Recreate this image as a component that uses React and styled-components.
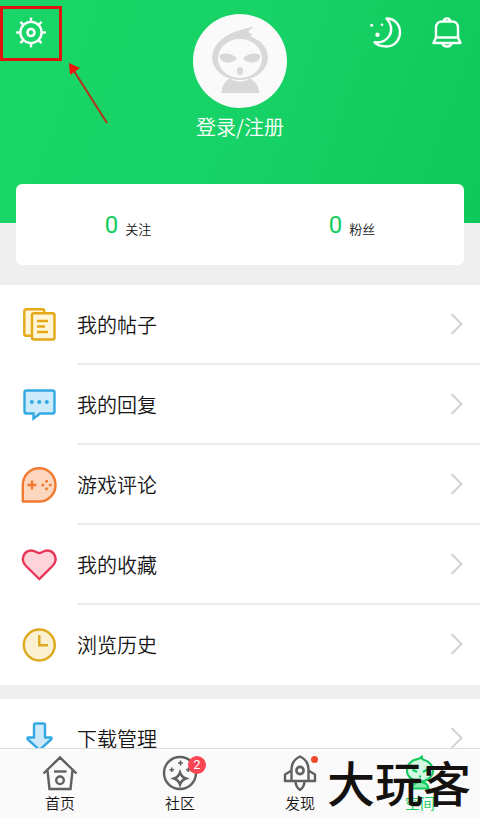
import React from "react";
import styled, { createGlobalStyle } from "styled-components";

// --- Global Styles ---
const GlobalStyle = createGlobalStyle`
  :root {
    --green: #12cc5e;
    --gray: #efefef;
    --line: #ececec;
    --ink: #161616;
    --icon: #606060;
    --mark: #dd1410;
  }

  * {
    box-sizing: border-box;
    margin: 0;
    padding: 0;
  }

  body {
    background: var(--gray);
    color: var(--ink);
    font-family: "Noto Sans CJK SC", sans-serif;
    font-weight: 350;
  }

  button {
    border: none;
    background: none;
    font: inherit;
    color: inherit;
    cursor: pointer;
  }

  a {
    color: inherit;
    text-decoration: none;
  }

  svg {
    display: block;
    flex: none;
  }
`;

// --- Styled Components ---
const Shell = styled.div`
  position: relative;
  display: flex;
  flex-direction: column;
  height: 100vh;
  overflow: hidden;
`;

const Content = styled.main`
  flex: 1;
  min-height: 0;
  overflow-y: auto;
  scrollbar-width: none;
`;

const Header = styled.header`
  display: grid;
  grid-template-columns: 1fr auto 1fr;
  align-items: start;
  padding: 14px 16px 81px;
  background: linear-gradient(110deg, #1ad668 0%, #17d266 50%, #0fc85b 100%);
`;

const Tools = styled.div`
  display: flex;
  gap: 26px;
  justify-content: ${({ $end }) => ($end ? "flex-end" : "flex-start")};
`;

const IconButton = styled.button`
  padding-top: 1px;
`;

const Profile = styled.a`
  display: flex;
  flex-direction: column;
  align-items: center;
  gap: 4px;
  color: #fff;
  font-size: 20px;
  line-height: 30px;
`;

const Avatar = styled.span`
  width: 94px;
  height: 94px;
  border-radius: 50%;
  background: #fafafa;
  overflow: hidden;
`;

const StatsCard = styled.section`
  position: relative;
  display: grid;
  grid-template-columns: 1fr 1fr;
  height: 81px;
  margin: -39px 16px 20px;
  border-radius: 6px;
  background: #fff;
`;

const Stat = styled.a`
  display: flex;
  align-items: center;
  justify-content: center;
  gap: 7px;
  font-size: 13px;

  strong {
    color: var(--green);
    font-family: Roboto, sans-serif;
    font-size: 24px;
    font-weight: 400;
  }

  span {
    padding-top: 8px;
  }
`;

const Menu = styled.nav`
  margin-bottom: 14px;
  background: #fff;
`;

const MenuRow = styled.a`
  display: flex;
  align-items: center;
  gap: 18px;
  height: 80px;
  padding-left: 19px;
`;

const MenuLabel = styled.span`
  display: flex;
  flex: 1;
  align-items: center;
  justify-content: space-between;
  height: 80px;
  padding-right: 16px;
  border-bottom: 2px solid var(--line);
  font-size: 20px;

  ${MenuRow}:last-child & {
    border-color: transparent;
  }
`;

const TabBar = styled.nav`
  display: grid;
  grid-template-columns: repeat(4, 1fr);
  height: 70px;
  padding-top: 6px;
  border-top: 1px solid #dedede;
  background: #fafafa;
`;

const Tab = styled.a`
  display: flex;
  flex-direction: column;
  align-items: center;
  color: ${({ $active }) => ($active ? "var(--green)" : "var(--ink)")};
  font-size: 15px;
  line-height: 24px;
`;

const TabIcon = styled.span`
  position: relative;
`;

const Badge = styled.span`
  position: absolute;
  top: 1px;
  right: -8px;
  width: 18px;
  height: 18px;
  border-radius: 50%;
  background: #fa4454;
  color: #fff;
  font-family: Roboto, sans-serif;
  font-size: 13px;
  font-weight: 400;
  line-height: 18px;
  text-align: center;
`;

const Dot = styled.span`
  position: absolute;
  top: 1px;
  right: 0;
  width: 7px;
  height: 7px;
  border-radius: 50%;
  background: #f04a2c;
`;

const Highlight = styled.div`
  position: absolute;
  top: 6px;
  left: 0;
  width: 62px;
  height: 55px;
  border: 3px solid var(--mark);
  pointer-events: none;
`;

const Arrow = styled.svg`
  position: absolute;
  top: 60px;
  left: 64px;
  pointer-events: none;
`;

const Watermark = styled.div`
  position: absolute;
  right: 9px;
  bottom: 13px;
  color: #14110f;
  font-size: 48px;
  font-weight: 500;
  line-height: 48px;
  pointer-events: none;
`;

// --- Icons ---
const GearIcon = () => (
  <svg width="30" height="36" viewBox="0 0 30 36" fill="none" stroke="#fff" strokeWidth="2.400">
    <circle cx="15" cy="17.500" r="10.600" />
    <circle cx="15" cy="17.500" r="3.500" strokeWidth="2.600" />
    {[0, 45, 90, 135, 180, 225, 270, 315].map((a) => (
      <path key={a} d="M15 7V2.600" transform={`rotate(${a} 15 17.500)`} />
    ))}
  </svg>
);

const MoonIcon = () => (
  <svg width="34" height="36" viewBox="0 0 34 36" fill="none" stroke="#fff" strokeWidth="2.400" strokeLinejoin="round">
    <path d="M16.500 3.500C24.500 3.500 30 9.500 30 17.300C30 25.500 24 31.500 16.500 31.500C11.500 31.500 7 30.300 4.500 27.300C11 28 16.500 25.500 19.500 20.500C22.500 15.500 21.500 8.500 16.500 3.500Z" />
    <g fill="#fff" stroke="none">
      <circle cx="7.500" cy="19.700" r="2.200" />
      <circle cx="1.700" cy="10.300" r="1.500" />
      <circle cx="12" cy="9.800" r="1.300" />
    </g>
  </svg>
);

const BellIcon = () => (
  <svg width="34" height="36" viewBox="0 0 34 36" fill="none" stroke="#fff" strokeWidth="2.400" strokeLinejoin="round">
    <path d="M6 22.500V12.500C6 9 8.500 6.500 12 6.500H22C25.500 6.500 28 9 28 12.500V22.500" />
    <path d="M6 22.500H28L30.500 28H3.500Z" />
    <path d="M14 6C14 2.500 20 2.500 20 6" />
    <path d="M12.500 28.500C13.500 32.500 20.500 32.500 21.500 28.500" />
  </svg>
);

const MascotFace = () => (
  <svg width="94" height="94" viewBox="0 0 94 94" fill="#d8d8d8">
    <ellipse cx="47" cy="43.500" rx="28" ry="22.500" />
    <path d="M22 33C30 21 41 17 59 13C60 13 60 14 58 15C55 17 55 18.500 57.500 19.500C60 20.500 59.500 21.500 57 22L60 27Z" />
    <ellipse cx="47" cy="44.500" rx="22" ry="19.500" fill="#fafafa" />
    <path d="M26.500 42C29 37 41 40 44 44.500C39 50 28 50.500 26.500 42ZM67.500 42C65 37 53 40 50 44.500C55 50 66 50.500 67.500 42Z" />
    <ellipse cx="47" cy="57" rx="3" ry="4" />
    <path d="M28.500 79C28.500 72 32 67 37 64.500C43 68.500 51 68.500 57 64.500C62 67 66 72 66 79Z" />
  </svg>
);

const PostIcon = () => (
  <svg width="40" height="40" viewBox="0 0 40 40" fill="#fff5d9" stroke="#e5a817" strokeWidth="2.400">
    <rect x="5.300" y="4.300" width="20" height="26.500" rx="2" />
    <rect x="13" y="8.200" width="22.500" height="26.300" rx="2" />
    <path d="M18 16H29M18 21.500H26M18 27H29" />
  </svg>
);

const ReplyIcon = () => (
  <svg width="40" height="40" viewBox="0 0 40 40" fill="#cdebfb" stroke="#33a9e3" strokeWidth="2.400">
    <path d="M7.500 5.500H33.500Q35.500 5.500 35.500 7.500V26.500Q35.500 28.500 33.500 28.500H21L14.500 33.500V28.500H7.500Q5.500 28.500 5.500 26.500V7.500Q5.500 5.500 7.500 5.500Z" />
    <g fill="#33a9e3" stroke="none">
      <circle cx="12.800" cy="17" r="2" />
      <circle cx="20.300" cy="17" r="2" />
      <circle cx="27.800" cy="17" r="2" />
    </g>
  </svg>
);

const GameIcon = () => (
  <svg width="40" height="40" viewBox="0 0 40 40" fill="#fdd6bf" stroke="#f17a30" strokeWidth="2.400" strokeLinejoin="round">
    <path d="M3.800 36.500V20C3.800 10.500 11 3.300 20.300 3.300C29.500 3.300 36.500 10.500 36.500 20C36.500 29 29.500 36.500 20.300 36.500Z" />
    <path d="M8.500 20H17.500M13 15.500V24.500" />
    <g fill="#f17a30" stroke="none">
      <circle cx="27.500" cy="16.300" r="1.500" />
      <circle cx="27.500" cy="23.700" r="1.500" />
      <circle cx="23.800" cy="20" r="1.500" />
      <circle cx="31.200" cy="20" r="1.500" />
    </g>
  </svg>
);

const HeartIcon = () => (
  <svg width="40" height="40" viewBox="0 0 40 40" fill="#ffd3da" stroke="#e8365a" strokeWidth="2.400">
    <path d="M20.300 34L7 21C1 15 4.500 5.500 12.500 5.500C16 5.500 18 8 20.300 8C22.600 8 24.500 5.500 28 5.500C36 5.500 39.500 15 33.500 21Z" />
  </svg>
);

const ClockIcon = () => (
  <svg width="40" height="40" viewBox="0 0 40 40" fill="#fbf0d2" stroke="#dcaa1c" strokeWidth="2.400">
    <circle cx="20.300" cy="20" r="15.500" />
    <path d="M20.300 10V20.300H29" fill="none" />
  </svg>
);

const DownloadIcon = () => (
  <svg width="40" height="40" viewBox="0 0 40 40" fill="#cdeafb" stroke="#33a9e3" strokeWidth="2.400" strokeLinejoin="round">
    <path d="M16.500 4.500H24.500Q26 4.500 26 6V18.500H31.500Q33.500 18.500 32 20.500L20.500 31L9 20.500Q7.500 18.500 9.500 18.500H15V6Q15 4.500 16.500 4.500Z" />
  </svg>
);

const ChevronIcon = () => (
  <svg width="14" height="24" viewBox="0 0 14 24" fill="none" stroke="#d2d2d2" strokeWidth="2">
    <path d="M1.500 2L11.500 12L1.500 22" />
  </svg>
);

const HomeIcon = () => (
  <svg width="36" height="36" viewBox="0 0 36 36" fill="none" stroke="var(--icon)" strokeWidth="2.400">
    <path d="M1.500 18.500L18 2.500L34.500 18.500M5.500 15.500L7.500 34H28.500L30.500 15.500" />
    <path d="M12 16.500H24.500" />
    <circle cx="18" cy="25.300" r="3.800" />
  </svg>
);

const CommunityIcon = () => (
  <svg width="36" height="36" viewBox="0 0 36 36" fill="none" stroke="var(--icon)" strokeWidth="2.400">
    <circle cx="18" cy="18" r="16" />
    <path d="M18 17.500Q19.500 22 24 23.500Q19.500 25 18 29.500Q16.500 25 12 23.500Q16.500 22 18 17.500Z" />
    <path d="M18.500 5.500V10.500M16 8H21M9.700 12.500V17M7.500 14.700H12M26.300 12.500V17M24 14.700H28.500" strokeWidth="1.600" />
  </svg>
);

const RocketIcon = () => (
  <svg width="36" height="36" viewBox="0 0 36 36" fill="none" stroke="var(--icon)" strokeWidth="2.400" strokeLinejoin="round">
    <path d="M9.500 26V14C9.500 8 13 4 18 1.500C23 4 26.500 8 26.500 14V26Z" />
    <path d="M9.500 15.500L3 19.500V26H9.500M26.500 15.500L33 19.500V26H26.500" />
    <circle cx="18" cy="15.500" r="3.600" strokeWidth="2.600" />
    <path d="M13.500 26C13.500 30 16 33.500 18 35C20 33.500 22.500 30 22.500 26" />
  </svg>
);

const SpaceIcon = () => (
  <svg width="36" height="36" viewBox="0 0 36 36" fill="#d4fae2" stroke="#13c95f" strokeWidth="2.200" strokeLinejoin="round">
    <path d="M10 33.500C10 30 13 27 18 27C23 27 26.500 30 26.500 33.500Z" fill="#8beeb2" />
    <path d="M15.500 4.200C17 4 18.500 3.500 20 1.500C19.500 3 20 4 21 4.500C27 6 31 10.500 31 15.500C31 22 25 26.500 18 26.500C11 26.500 5 22 5 15.500C5 9.500 9.500 5 15.500 4.200Z" />
    <path d="M10.500 14.500L15 17M25.500 14.500L21 17" />
    <path d="M17 21.500H19" />
  </svg>
);

const personalItems = [
  { label: "我的帖子", Icon: PostIcon },
  { label: "我的回复", Icon: ReplyIcon },
  { label: "游戏评论", Icon: GameIcon },
  { label: "我的收藏", Icon: HeartIcon },
  { label: "浏览历史", Icon: ClockIcon },
];

const toolItems = [{ label: "下载管理", Icon: DownloadIcon }];

const tabs = [
  { label: "首页", Icon: HomeIcon },
  { label: "社区", Icon: CommunityIcon, count: 2 },
  { label: "发现", Icon: RocketIcon, dot: true },
  { label: "空间", Icon: SpaceIcon, active: true },
];

const MenuList = ({ items }) => (
  <Menu>
    {items.map(({ label, Icon }) => (
      <MenuRow href="#" key={label}>
        <Icon />
        <MenuLabel>
          {label}
          <ChevronIcon />
        </MenuLabel>
      </MenuRow>
    ))}
  </Menu>
);

const App = () => {
  return (
    <>
      <GlobalStyle />
      <Shell>
        <Content>
          <Header>
            <Tools>
              <IconButton aria-label="设置">
                <GearIcon />
              </IconButton>
            </Tools>
            <Profile href="#">
              <Avatar>
                <MascotFace />
              </Avatar>
              登录/注册
            </Profile>
            <Tools $end>
              <IconButton aria-label="夜间模式">
                <MoonIcon />
              </IconButton>
              <IconButton aria-label="通知">
                <BellIcon />
              </IconButton>
            </Tools>
          </Header>

          <StatsCard>
            <Stat href="#">
              <strong>0</strong>
              <span>关注</span>
            </Stat>
            <Stat href="#">
              <strong>0</strong>
              <span>粉丝</span>
            </Stat>
          </StatsCard>

          <MenuList items={personalItems} />
          <MenuList items={toolItems} />
        </Content>

        <TabBar>
          {tabs.map(({ label, Icon, count, dot, active }) => (
            <Tab href="#" key={label} $active={active}>
              <TabIcon>
                <Icon />
                {count && <Badge>{count}</Badge>}
                {dot && <Dot />}
              </TabIcon>
              {label}
            </Tab>
          ))}
        </TabBar>

        <Highlight />
        <Arrow width="48" height="66" viewBox="0 0 48 66">
          <path d="M43 63L10 11" stroke="#b5311b" strokeWidth="2" />
          <path d="M5 3L16 8L6 15Z" fill="#f3120c" />
        </Arrow>
        <Watermark>大玩客</Watermark>
      </Shell>
    </>
  );
};

export default App;
